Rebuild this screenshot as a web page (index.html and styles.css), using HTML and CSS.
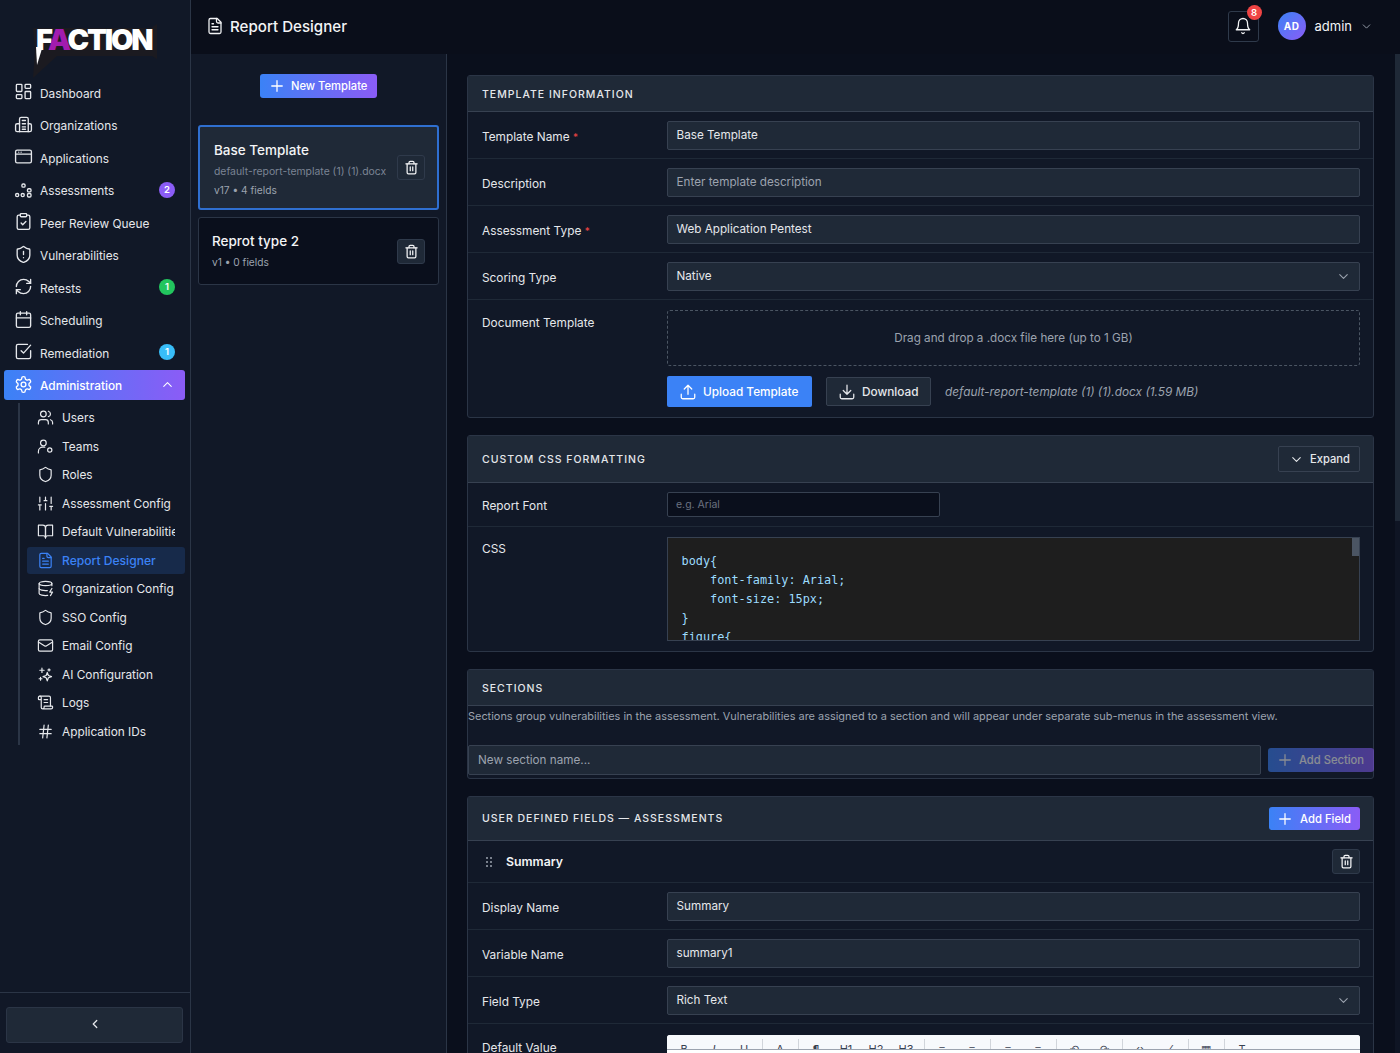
FILE: index.html
```html
<!DOCTYPE html>
<html lang="en">
<head>
    <meta charset="utf-8">
    <title>Report Designer</title>
    <link rel="stylesheet" href="styles.css">
</head>
<body>
    <svg class="sprite" xmlns="http://www.w3.org/2000/svg">
        <symbol id="i-dashboard" viewBox="0 0 24 24"><rect x="3" y="3" width="7" height="9" rx="1"/><rect x="14" y="3" width="7" height="5" rx="1"/><rect x="14" y="12" width="7" height="9" rx="1"/><rect x="3" y="16" width="7" height="5" rx="1"/></symbol>
        <symbol id="i-org" viewBox="0 0 24 24"><path d="M7 21V5a2 2 0 0 1 2-2h7a2 2 0 0 1 2 2v16"/><path d="M7 11H4a2 2 0 0 0-2 2v6a2 2 0 0 0 2 2h16a2 2 0 0 0 2-2v-6a2 2 0 0 0-2-2h-2"/><path d="M10.500 7h4M10.500 11h4M10.500 15h4M10.500 18h4"/></symbol>
        <symbol id="i-app" viewBox="0 0 24 24"><rect x="2" y="4" width="20" height="16" rx="2"/><path d="M2 9h20M6 6.500h.01M9 6.500h.01"/></symbol>
        <symbol id="i-assess" viewBox="0 0 24 24"><rect x="10" y="5" width="4" height="4" rx="1.500"/><circle cx="4" cy="19" r="2"/><circle cx="11" cy="19" r="2"/><rect x="17" y="17" width="4.500" height="4.500" rx="1.500"/><rect x="17" y="11" width="4.500" height="4" rx="1.500"/></symbol>
        <symbol id="i-clip" viewBox="0 0 24 24"><rect x="8" y="2" width="8" height="4" rx="1"/><path d="M16 4h2a2 2 0 0 1 2 2v14a2 2 0 0 1-2 2H6a2 2 0 0 1-2-2V6a2 2 0 0 1 2-2h2"/><path d="m9 14 2 2 4-4"/></symbol>
        <symbol id="i-shield" viewBox="0 0 24 24"><path d="M20 13c0 5-3.500 7.500-7.660 8.950a1 1 0 0 1-.67-.01C7.500 20.500 4 18 4 13V6a1 1 0 0 1 1-1c2 0 4.500-1.200 6.240-2.720a1.170 1.170 0 0 1 1.520 0C14.510 3.810 17 5 19 5a1 1 0 0 1 1 1z"/></symbol>
        <symbol id="i-shield-alert" viewBox="0 0 24 24"><path d="M20 13c0 5-3.500 7.500-7.660 8.950a1 1 0 0 1-.67-.01C7.500 20.500 4 18 4 13V6a1 1 0 0 1 1-1c2 0 4.500-1.200 6.240-2.720a1.170 1.170 0 0 1 1.520 0C14.510 3.810 17 5 19 5a1 1 0 0 1 1 1z"/><path d="M12 8v4M12 16h.01"/></symbol>
        <symbol id="i-refresh" viewBox="0 0 24 24"><path d="M3 12a9 9 0 0 1 9-9 9.750 9.750 0 0 1 6.740 2.740L21 8"/><path d="M21 3v5h-5"/><path d="M21 12a9 9 0 0 1-9 9 9.750 9.750 0 0 1-6.740-2.740L3 16"/><path d="M8 16H3v5"/></symbol>
        <symbol id="i-calendar" viewBox="0 0 24 24"><rect x="3" y="4" width="18" height="18" rx="2"/><path d="M8 2v4M16 2v4M3 10h18"/></symbol>
        <symbol id="i-check" viewBox="0 0 24 24"><path d="M21 11v8a2 2 0 0 1-2 2H5a2 2 0 0 1-2-2V5a2 2 0 0 1 2-2h12"/><path d="m9 11 3 3 9-10"/></symbol>
        <symbol id="i-gear" viewBox="0 0 24 24"><path d="M12.220 2h-.44a2 2 0 0 0-2 2v.18a2 2 0 0 1-1 1.730l-.43.25a2 2 0 0 1-2 0l-.15-.08a2 2 0 0 0-2.730.73l-.22.38a2 2 0 0 0 .73 2.730l.15.1a2 2 0 0 1 1 1.720v.51a2 2 0 0 1-1 1.740l-.15.09a2 2 0 0 0-.73 2.730l.22.38a2 2 0 0 0 2.730.73l.15-.08a2 2 0 0 1 2 0l.43.25a2 2 0 0 1 1 1.730V20a2 2 0 0 0 2 2h.44a2 2 0 0 0 2-2v-.18a2 2 0 0 1 1-1.730l.43-.25a2 2 0 0 1 2 0l.15.08a2 2 0 0 0 2.730-.73l.22-.39a2 2 0 0 0-.73-2.730l-.15-.08a2 2 0 0 1-1-1.740v-.5a2 2 0 0 1 1-1.740l.15-.09a2 2 0 0 0 .73-2.730l-.22-.38a2 2 0 0 0-2.730-.73l-.15.08a2 2 0 0 1-2 0l-.43-.25a2 2 0 0 1-1-1.730V4a2 2 0 0 0-2-2z"/><circle cx="12" cy="12" r="3"/></symbol>
        <symbol id="i-users" viewBox="0 0 24 24"><path d="M16 21v-2a4 4 0 0 0-4-4H6a4 4 0 0 0-4 4v2"/><circle cx="9" cy="7" r="4"/><path d="M22 21v-2a4 4 0 0 0-3-3.870"/><path d="M16 3.130a4 4 0 0 1 0 7.750"/></symbol>
        <symbol id="i-teams" viewBox="0 0 24 24"><circle cx="9" cy="7" r="4"/><path d="M2 21v-2a6 6 0 0 1 6-6h3"/><circle cx="18" cy="17" r="3"/></symbol>
        <symbol id="i-sliders" viewBox="0 0 24 24"><path d="M4 21v-7M4 10V3M12 21v-9M12 8V3M20 21v-5M20 12V3M2 14h4M10 8h4M18 16h4"/></symbol>
        <symbol id="i-book" viewBox="0 0 24 24"><path d="M2 3h6a4 4 0 0 1 4 4v14a3 3 0 0 0-3-3H2z"/><path d="M22 3h-6a4 4 0 0 0-4 4v14a3 3 0 0 1 3-3h7z"/></symbol>
        <symbol id="i-file" viewBox="0 0 24 24"><path d="M15 2H6a2 2 0 0 0-2 2v16a2 2 0 0 0 2 2h12a2 2 0 0 0 2-2V7Z"/><path d="M14 2v4a2 2 0 0 0 2 2h4"/><path d="M10 9H8M16 13H8M16 17H8"/></symbol>
        <symbol id="i-db" viewBox="0 0 24 24"><ellipse cx="12" cy="5" rx="9" ry="3"/><path d="M3 5v14a9 3 0 0 0 12 2.840"/><path d="M21 5v3"/><path d="m21 12-3 5h4l-3 5"/><path d="M3 12a9 3 0 0 0 11.590 2.870"/></symbol>
        <symbol id="i-mail" viewBox="0 0 24 24"><rect x="2" y="4" width="20" height="16" rx="2"/><path d="m22 7-8.970 5.700a1.940 1.940 0 0 1-2.060 0L2 7"/></symbol>
        <symbol id="i-sparkle" viewBox="0 0 24 24"><path d="m14.500 9 1.600 4.400 4.400 1.600-4.400 1.600-1.600 4.400-1.600-4.400L8.500 15l4.400-1.600z"/><path d="M7 3v6M4 6h6M5 16v4M3 18h4M17 4v3M15.500 5.500h3"/></symbol>
        <symbol id="i-scroll" viewBox="0 0 24 24"><path d="M15 12h-5M15 8h-5"/><path d="M19 17V5a2 2 0 0 0-2-2H4"/><path d="M8 21h12a2 2 0 0 0 2-2v-1a1 1 0 0 0-1-1H11a1 1 0 0 0-1 1v1a2 2 0 1 1-4 0V5a2 2 0 1 0-4 0v2a1 1 0 0 0 1 1h3"/></symbol>
        <symbol id="i-hash" viewBox="0 0 24 24"><path d="M4 9h16M4 15h16M10 3 8 21M16 3l-2 18"/></symbol>
        <symbol id="i-plus" viewBox="0 0 24 24"><path d="M5 12h14M12 5v14"/></symbol>
        <symbol id="i-trash" viewBox="0 0 24 24"><path d="M3 6h18"/><path d="M19 6v14a2 2 0 0 1-2 2H7a2 2 0 0 1-2-2V6"/><path d="M8 6V4a2 2 0 0 1 2-2h4a2 2 0 0 1 2 2v2"/><path d="M10 11v6M14 11v6"/></symbol>
        <symbol id="i-bell" viewBox="0 0 24 24"><path d="M6 8a6 6 0 0 1 12 0c0 7 3 9 3 9H3s3-2 3-9"/><path d="M10.300 21a1.940 1.940 0 0 0 3.400 0"/></symbol>
        <symbol id="i-down" viewBox="0 0 24 24"><path d="m6 9 6 6 6-6"/></symbol>
        <symbol id="i-up" viewBox="0 0 24 24"><path d="m18 15-6-6-6 6"/></symbol>
        <symbol id="i-left" viewBox="0 0 24 24"><path d="m15 18-6-6 6-6"/></symbol>
        <symbol id="i-upload" viewBox="0 0 24 24"><path d="M21 15v4a2 2 0 0 1-2 2H5a2 2 0 0 1-2-2v-4"/><path d="m17 8-5-5-5 5M12 3v12"/></symbol>
        <symbol id="i-download" viewBox="0 0 24 24"><path d="M21 15v4a2 2 0 0 1-2 2H5a2 2 0 0 1-2-2v-4"/><path d="m7 10 5 5 5-5M12 15V3"/></symbol>
    </svg>

    <aside class="sidebar">
        <div class="logo">
            <svg class="logo-back" viewBox="0 0 130 60">
                <path d="M3 7h118l6-4v35l-5-3H27L3 57l2-27z"/>
                <path class="logo-spike" d="M6 26h6.500L7 44z"/>
            </svg>
            <span class="logo-text">F<span class="logo-a">A</span>CTION</span>
        </div>

        <nav class="nav">
            <a class="nav-item"><svg class="icon"><use href="#i-dashboard"/></svg>Dashboard</a>
            <a class="nav-item"><svg class="icon"><use href="#i-org"/></svg>Organizations</a>
            <a class="nav-item"><svg class="icon"><use href="#i-app"/></svg>Applications</a>
            <a class="nav-item"><svg class="icon"><use href="#i-assess"/></svg>Assessments<span class="count purple">2</span></a>
            <a class="nav-item"><svg class="icon"><use href="#i-clip"/></svg>Peer Review Queue</a>
            <a class="nav-item"><svg class="icon"><use href="#i-shield-alert"/></svg>Vulnerabilities</a>
            <a class="nav-item"><svg class="icon"><use href="#i-refresh"/></svg>Retests<span class="count green">1</span></a>
            <a class="nav-item"><svg class="icon"><use href="#i-calendar"/></svg>Scheduling</a>
            <a class="nav-item"><svg class="icon"><use href="#i-check"/></svg>Remediation<span class="count sky">1</span></a>
            <a class="nav-item open"><svg class="icon"><use href="#i-gear"/></svg>Administration<svg class="icon caret"><use href="#i-up"/></svg></a>
        </nav>

        <div class="subnav">
            <a class="sub-item"><svg class="icon"><use href="#i-users"/></svg>Users</a>
            <a class="sub-item"><svg class="icon"><use href="#i-teams"/></svg>Teams</a>
            <a class="sub-item"><svg class="icon"><use href="#i-shield"/></svg>Roles</a>
            <a class="sub-item"><svg class="icon"><use href="#i-sliders"/></svg>Assessment Config</a>
            <a class="sub-item"><svg class="icon"><use href="#i-book"/></svg><span class="clip">Default Vulnerabilities</span></a>
            <a class="sub-item current"><svg class="icon"><use href="#i-file"/></svg>Report Designer</a>
            <a class="sub-item"><svg class="icon"><use href="#i-db"/></svg>Organization Config</a>
            <a class="sub-item"><svg class="icon"><use href="#i-shield"/></svg>SSO Config</a>
            <a class="sub-item"><svg class="icon"><use href="#i-mail"/></svg>Email Config</a>
            <a class="sub-item"><svg class="icon"><use href="#i-sparkle"/></svg>AI Configuration</a>
            <a class="sub-item"><svg class="icon"><use href="#i-scroll"/></svg>Logs</a>
            <a class="sub-item"><svg class="icon"><use href="#i-hash"/></svg>Application IDs</a>
        </div>

        <div class="sidebar-foot">
            <button class="collapse"><svg class="icon"><use href="#i-left"/></svg></button>
        </div>
    </aside>

    <div class="content">
        <header class="topbar">
            <svg class="icon title-icon"><use href="#i-file"/></svg>
            <h1 class="title">Report Designer</h1>
            <div class="top-right">
                <button class="bell"><svg class="icon"><use href="#i-bell"/></svg><span class="bell-badge">8</span></button>
                <span class="avatar">AD</span>
                <span class="username">admin</span>
                <svg class="icon user-caret"><use href="#i-down"/></svg>
            </div>
        </header>

        <div class="workspace">
            <section class="templates">
                <div class="new-wrap">
                    <button class="btn-grad new-template"><svg class="icon"><use href="#i-plus"/></svg>New Template</button>
                </div>
                <div class="card selected">
                    <div class="card-text">
                        <div class="card-name">Base Template</div>
                        <div class="card-file">default-report-template (1) (1).docx</div>
                        <div class="card-meta">v17 • 4 fields</div>
                    </div>
                    <button class="btn-trash"><svg class="icon"><use href="#i-trash"/></svg></button>
                </div>
                <div class="card">
                    <div class="card-text">
                        <div class="card-name">Reprot type 2</div>
                        <div class="card-meta">v1 • 0 fields</div>
                    </div>
                    <button class="btn-trash"><svg class="icon"><use href="#i-trash"/></svg></button>
                </div>
            </section>

            <main class="designer">
                <section class="panel">
                    <div class="panel-head">Template Information</div>
                    <div class="row">
                        <label class="row-label">Template Name <span class="req">*</span></label>
                        <div class="input">Base Template</div>
                    </div>
                    <div class="row">
                        <label class="row-label">Description</label>
                        <div class="input placeholder">Enter template description</div>
                    </div>
                    <div class="row">
                        <label class="row-label">Assessment Type <span class="req">*</span></label>
                        <div class="input">Web Application Pentest</div>
                    </div>
                    <div class="row">
                        <label class="row-label">Scoring Type</label>
                        <div class="input select">Native<svg class="icon"><use href="#i-down"/></svg></div>
                    </div>
                    <div class="row row-doc">
                        <label class="row-label doc-label">Document Template</label>
                        <div>
                            <div class="dropzone">Drag and drop a .docx file here (up to 1 GB)</div>
                            <div class="doc-actions">
                                <button class="btn-upload"><svg class="icon"><use href="#i-upload"/></svg>Upload Template</button>
                                <button class="btn-plain"><svg class="icon"><use href="#i-download"/></svg>Download</button>
                                <span class="doc-name">default-report-template (1) (1).docx (1.59 MB)</span>
                            </div>
                        </div>
                    </div>
                </section>

                <section class="panel">
                    <div class="panel-head tall">Custom CSS Formatting
                        <button class="btn-plain btn-expand"><svg class="icon"><use href="#i-down"/></svg>Expand</button>
                    </div>
                    <div class="row row-font">
                        <label class="row-label font-label">Report Font</label>
                        <div class="font-input">e.g. Arial</div>
                    </div>
                    <div class="row row-css">
                        <label class="row-label css-label">CSS</label>
                        <div class="editor">
<pre class="code">body{
    font-family: Arial;
    font-size: 15px;
}
figure{
    margin: 0;</pre>
                            <span class="editor-thumb"></span>
                        </div>
                    </div>
                </section>

                <section class="panel">
                    <div class="panel-head">Sections</div>
                    <p class="section-note">Sections group vulnerabilities in the assessment. Vulnerabilities are assigned to a section and will appear under separate sub-menus in the assessment view.</p>
                    <div class="section-add">
                        <div class="input placeholder section-input">New section name...</div>
                        <button class="btn-grad btn-add-section"><svg class="icon"><use href="#i-plus"/></svg>Add Section</button>
                    </div>
                </section>

                <section class="panel">
                    <div class="panel-head tall-2">User Defined Fields — Assessments
                        <button class="btn-grad btn-add-field"><svg class="icon"><use href="#i-plus"/></svg>Add Field</button>
                    </div>
                    <div class="field-head">
                        <svg class="grip" viewBox="0 0 8 12"><circle cx="2" cy="2" r="1"/><circle cx="6" cy="2" r="1"/><circle cx="2" cy="6" r="1"/><circle cx="6" cy="6" r="1"/><circle cx="2" cy="10" r="1"/><circle cx="6" cy="10" r="1"/></svg>
                        <span class="field-name">Summary</span>
                        <button class="btn-trash"><svg class="icon"><use href="#i-trash"/></svg></button>
                    </div>
                    <div class="row">
                        <label class="row-label">Display Name</label>
                        <div class="input">Summary</div>
                    </div>
                    <div class="row">
                        <label class="row-label">Variable Name</label>
                        <div class="input">summary1</div>
                    </div>
                    <div class="row">
                        <label class="row-label">Field Type</label>
                        <div class="input select">Rich Text<svg class="icon"><use href="#i-down"/></svg></div>
                    </div>
                    <div class="row row-value">
                        <label class="row-label value-label">Default Value</label>
                        <div class="rich">
                            <div class="toolbar">
                                <span>B</span><span><i>I</i></span><span><u>U</u></span><b class="sep"></b>
                                <span>A</span><b class="sep"></b>
                                <span>¶</span><span>H1</span><span>H2</span><span>H3</span><b class="sep"></b>
                                <span>≡</span><span>≡</span><b class="sep"></b>
                                <span>≡</span><span>≡</span><b class="sep"></b>
                                <span>↶</span><span>↷</span><b class="sep"></b>
                                <span>‹›</span><span>⁄</span><b class="sep"></b>
                                <span>▦</span><b class="sep"></b>
                                <span>T</span>
                            </div>
                        </div>
                    </div>
                </section>
            </main>
            <div class="scrollbar"><span class="scroll-thumb"></span></div>
        </div>
    </div>
</body>
</html>
```

FILE: styles.css
```css
* {
    box-sizing: border-box;
}

html, body {
    height: 100%;
}

body {
    margin: 0;
    display: flex;
    overflow: hidden;
    background: #0a0f1c;
    color: #e5e7eb;
    font-family: Inter, "Noto Sans", sans-serif;
    font-size: 11.85px;
}

button {
    font-family: inherit;
    cursor: pointer;
}

.sprite {
    display: none;
}

.icon {
    width: 18px;
    height: 18px;
    flex: none;
    fill: none;
    stroke: currentColor;
    stroke-width: 1.7;
    stroke-linecap: round;
    stroke-linejoin: round;
}

/* sidebar */
.sidebar {
    width: 191px;
    flex: none;
    display: flex;
    flex-direction: column;
    background: #111827;
    border-right: 1px solid #2b3546;
}

.logo {
    position: relative;
    height: 77px;
    padding: 23px 0 0 36px;
}

.logo-back {
    position: absolute;
    left: 30px;
    top: 21px;
    width: 130px;
    height: 60px;
    fill: #1b1a20;
}

.logo-spike {
    fill: #fff;
}

.logo-text {
    position: relative;
    display: block;
    font-size: 29px;
    line-height: 34px;
    font-weight: 900;
    letter-spacing: -2.2px;
    color: #fff;
}

.logo-a {
    color: #a21caf;
}

.nav {
    display: flex;
    flex-direction: column;
    gap: 2px;
    padding: 0 5px 0 4px;
}

.nav-item {
    display: flex;
    align-items: center;
    gap: 7.5px;
    height: 30.5px;
    padding: 3px 10px 0 9.5px;
    border-radius: 3px;
    color: #e5e7eb;
}

.nav-item .icon {
    width: 19px;
    height: 19px;
    margin-top: -4px;
}

.count {
    margin-left: auto;
    margin-top: -3px;
    width: 16px;
    height: 16px;
    border-radius: 50%;
    color: #fff;
    font-size: 9.5px;
    font-weight: 600;
    line-height: 16px;
    text-align: center;
}

.purple { background: #8b5cf6; }
.green { background: #22c55e; }
.sky { background: #38bdf8; }

.nav-item.open {
    background: linear-gradient(90deg, #3b82f6, #8b5cf6);
    color: #fff;
    font-weight: 500;
}

.nav-item .caret {
    width: 15px;
    height: 15px;
    margin-left: auto;
    margin-top: -3px;
}

.subnav {
    display: flex;
    flex-direction: column;
    gap: 1.5px;
    margin: 3px 5px 0 18px;
    padding: 1px 0 0 7px;
    border-left: 2px solid #2b3546;
}

.sub-item {
    display: flex;
    align-items: center;
    gap: 8.4px;
    height: 27px;
    padding: 1px 10px 0 9.6px;
    border-radius: 3px;
    color: #e5e7eb;
    white-space: nowrap;
    overflow: hidden;
}

.sub-item .icon {
    width: 17px;
    height: 17px;
    margin-top: -1px;
}

.clip {
    overflow: hidden;
}

.sub-item.current {
    background: #172a4a;
    color: #3b82f6;
    font-size: 12.1px;
    font-weight: 500;
}

.sidebar-foot {
    margin-top: auto;
    padding: 14px 7px 10px 6px;
    border-top: 1px solid #2b3546;
}

.collapse {
    display: flex;
    align-items: center;
    justify-content: center;
    width: 100%;
    height: 36px;
    padding: 0 0 2px;
    background: #1f2937;
    border: 1px solid #2b3546;
    border-radius: 3px;
    color: #e5e7eb;
}

.collapse .icon {
    width: 14px;
    height: 14px;
    stroke-width: 2.2;
}

/* top bar */
.content {
    flex: 1;
    min-width: 0;
    display: flex;
    flex-direction: column;
}

.topbar {
    height: 54px;
    flex: none;
    display: flex;
    align-items: center;
    padding: 0 27px 2px 15px;
    background: #0a0e1a;
}

.title-icon {
    margin-right: 6px;
    color: #f3f4f6;
}

.title {
    margin: 0;
    color: #f3f4f6;
    font-size: 15.1px;
    font-weight: 500;
}

.top-right {
    margin-left: auto;
    display: flex;
    align-items: center;
}

.bell {
    position: relative;
    display: flex;
    align-items: center;
    justify-content: center;
    width: 31px;
    height: 31px;
    margin-right: 19px;
    padding: 0;
    background: transparent;
    border: 1px solid #2f3a4b;
    border-radius: 3px;
    color: #f3f4f6;
}

.bell-badge {
    position: absolute;
    top: -7px;
    right: -4px;
    width: 15px;
    height: 15px;
    border-radius: 50%;
    background: #ef4444;
    color: #fff;
    font-size: 9.5px;
    font-weight: 600;
    line-height: 15px;
}

.avatar {
    width: 28px;
    height: 28px;
    border-radius: 50%;
    background: linear-gradient(135deg, #3b82f6, #8b5cf6);
    color: #fff;
    font-size: 10px;
    font-weight: 700;
    letter-spacing: 0.5px;
    line-height: 28px;
    text-align: center;
}

.username {
    margin: 0 8px 0 9px;
    color: #f3f4f6;
    font-size: 13px;
}

.user-caret {
    width: 13px;
    height: 13px;
    color: #9ca3af;
}

/* template list */
.workspace {
    flex: 1;
    min-height: 0;
    display: flex;
}

.templates {
    width: 256px;
    flex: none;
    padding: 0 7px;
    background: #111827;
    border-right: 1px solid #2b3546;
}

.new-wrap {
    display: flex;
    justify-content: center;
    padding: 20px 0 27px;
}

.btn-grad {
    display: flex;
    align-items: center;
    border: 0;
    border-radius: 3px;
    background: linear-gradient(90deg, #3b82f6, #8b5cf6);
    color: #fff;
    font-weight: 500;
}

.new-template {
    width: 117px;
    height: 24px;
    gap: 5px;
    padding: 0 0 0 8px;
    font-size: 11.2px;
}

.card {
    display: flex;
    align-items: center;
    justify-content: space-between;
    width: 241px;
    height: 68px;
    margin-bottom: 7px;
    padding: 0 13px;
    background: #0a0f1c;
    border: 1px solid #2b3546;
    border-radius: 3px;
}

.card .card-text {
    margin-top: -2px;
}

.card.selected {
    height: 85px;
    padding: 0 12px 0 14px;
    background: #1f2937;
    border: 2px solid #2f6fd0;
}

.card.selected .card-text {
    margin-top: 0;
    padding-top: 2px;
}

.card-name {
    color: #f3f4f6;
    font-size: 13.5px;
    font-weight: 500;
    margin-bottom: 7px;
}

.card-file {
    margin-bottom: 6px;
    color: #7b8494;
    font-size: 10.4px;
}

.card-meta {
    color: #9ca3af;
    font-size: 10.2px;
}

.btn-trash {
    display: flex;
    align-items: center;
    justify-content: center;
    width: 28px;
    height: 25px;
    padding: 0;
    background: #1f2937;
    border: 1px solid #2f3a4b;
    border-radius: 3px;
    color: #f3f4f6;
}

.btn-trash .icon {
    width: 15px;
    height: 15px;
    stroke-width: 2;
}

/* designer panels */
.designer {
    flex: 1;
    min-width: 0;
    display: flex;
    flex-direction: column;
    gap: 17px;
    padding: 21px 21px 0 20px;
    overflow: hidden;
}

.panel {
    flex: none;
    background: #111827;
    border: 1px solid #2b3546;
    border-radius: 3px;
}

.panel-head {
    display: flex;
    align-items: center;
    justify-content: space-between;
    height: 36px;
    padding: 1px 13px 0 14px;
    background: #1f2937;
    border-bottom: 1px solid #374151;
    color: #e5e7eb;
    font-size: 10.5px;
    font-weight: 500;
    letter-spacing: 1px;
    text-transform: uppercase;
}

.panel-head.tall {
    height: 47px;
    padding-top: 0;
}

.panel-head.tall-2 {
    height: 44px;
    padding-top: 0;
}

.row {
    display: grid;
    grid-template-columns: 185px 1fr;
    height: 47px;
    padding: 9px 13px 0 14px;
    border-bottom: 1px solid #1f2937;
}

.row-label {
    padding-top: 9px;
    color: #e5e7eb;
}

.req {
    color: #ef4444;
    font-size: 10px;
}

.input {
    display: flex;
    align-items: center;
    justify-content: space-between;
    height: 29px;
    padding: 0 8px 1px 8.5px;
    background: #1f2937;
    border: 1px solid #374151;
    border-radius: 2px;
    color: #e5e7eb;
    font-size: 11.7px;
}

.placeholder {
    color: #9ca3af;
}

.select .icon {
    width: 15px;
    height: 15px;
    color: #9ca3af;
}

.row-doc {
    height: 117px;
    padding-top: 10px;
    border-bottom: 0;
}

.doc-label {
    padding-top: 6px;
}

.dropzone {
    height: 56px;
    border: 1px dashed #4b5563;
    border-radius: 3px;
    color: #9ca3af;
    font-size: 11.7px;
    line-height: 54px;
    text-align: center;
}

.doc-actions {
    display: flex;
    align-items: center;
    margin-top: 10px;
}

.btn-upload {
    display: flex;
    align-items: center;
    gap: 6px;
    width: 145px;
    height: 31px;
    padding: 0 0 0 12px;
    background: #3b82f6;
    border: 0;
    border-radius: 2px;
    color: #fff;
    font-size: 11.8px;
    font-weight: 500;
}

.btn-plain {
    display: flex;
    align-items: center;
    gap: 6px;
    width: 105px;
    height: 29px;
    margin-left: 14px;
    padding: 0 0 0 11px;
    background: #1f2937;
    border: 1px solid #374151;
    border-radius: 2px;
    color: #e5e7eb;
    font-size: 11.8px;
    font-weight: 500;
}

.doc-name {
    margin-left: 14px;
    color: #9ca3af;
    font-style: italic;
}

.btn-expand {
    width: 82px;
    height: 26px;
    margin: 0;
    padding: 0 0 0 10px;
    gap: 6px;
    font-size: 11.2px;
    letter-spacing: 0;
    text-transform: none;
}

.btn-expand .icon {
    width: 15px;
    height: 15px;
}

.row-font {
    height: 44px;
}

.font-label {
    padding-top: 7px;
}

.font-input {
    width: 273px;
    height: 25px;
    padding: 0 8px;
    background: #0a0f1c;
    border: 1px solid #374151;
    border-radius: 2px;
    color: #6b7280;
    font-size: 10.5px;
    line-height: 23px;
}

.row-css {
    height: 124px;
    padding-top: 10px;
    border-bottom: 0;
}

.css-label {
    padding-top: 5px;
}

.editor {
    position: relative;
    height: 104px;
    overflow: hidden;
    background: #1e1e1e;
    border: 1px solid #374151;
}

.code {
    margin: 0;
    padding: 14px 13.5px;
    color: #9cdcfe;
    font-family: "DejaVu Sans Mono", "Liberation Mono", monospace;
    font-size: 11.85px;
    line-height: 19px;
}

.editor-thumb {
    position: absolute;
    top: 0;
    right: 0;
    width: 7px;
    height: 18px;
    background: #4b5563;
}

.section-note {
    margin: 4px 0 0;
    color: #9ca3af;
    font-size: 10.93px;
    line-height: 13px;
}

.section-add {
    display: flex;
    align-items: center;
    justify-content: space-between;
    margin-top: 22px;
    padding-bottom: 3px;
}

.section-input {
    width: 793px;
    height: 30px;
    padding: 0 9px;
}

.btn-add-section {
    width: 106px;
    height: 24px;
    margin-right: -1px;
    gap: 5px;
    padding: 0 0 0 8px;
    font-size: 11.2px;
    opacity: 0.5;
}

.btn-add-field {
    width: 91px;
    height: 23px;
    gap: 6px;
    padding: 0 0 0 7px;
    font-size: 11.3px;
    letter-spacing: 0;
    text-transform: none;
}

.field-head {
    display: flex;
    align-items: center;
    height: 42px;
    padding: 0 13px 0 17px;
    border-bottom: 1px solid #1f2937;
}

.grip {
    width: 8px;
    height: 12px;
    margin-right: 13px;
    fill: #9ca3af;
}

.field-name {
    color: #f3f4f6;
    font-size: 12.3px;
    font-weight: 600;
}

.field-head .btn-trash {
    margin-left: auto;
}

.row-value {
    height: 60px;
    padding-top: 11px;
    border-bottom: 0;
}

.value-label {
    padding-top: 6px;
}

.rich {
    height: 24px;
    overflow: hidden;
    background: #fff;
    border-radius: 3px 3px 0 0;
}

.toolbar {
    display: flex;
    align-items: flex-start;
    height: 15px;
    padding-left: 2px;
    overflow: hidden;
    background: #f7f9fc;
    border-bottom: 1px solid #9ca3af;
    color: #374151;
    font-size: 11px;
    line-height: 11px;
}

.toolbar span {
    flex: none;
    width: 30px;
    padding-top: 9px;
    text-align: center;
    white-space: nowrap;
}

.sep {
    flex: none;
    width: 1px;
    height: 15px;
    margin: 4px 2.5px 0;
    background: #d1d5db;
}

.scrollbar {
    width: 5px;
    flex: none;
    background: #0f1524;
}

.scroll-thumb {
    display: block;
    height: 467px;
    background: #1f2937;
}
```
